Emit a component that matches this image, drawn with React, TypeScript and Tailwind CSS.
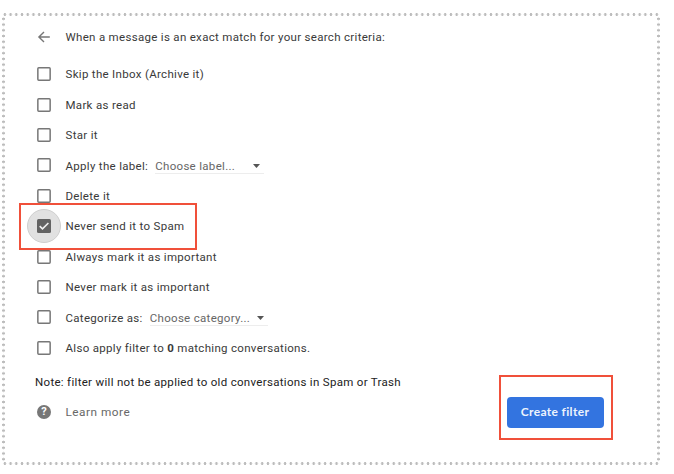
import type { ReactNode } from "react";

function Checkbox({ checked = false }: { checked?: boolean }) {
  if (checked) {
    return (
      <span className="-mx-[10px] flex size-[34px] shrink-0 items-center justify-center rounded-full border border-[#cfcfcf] bg-[#e1e1e1]">
        <span className="flex size-[14px] items-center justify-center rounded-[1.5px] bg-[#636363]">
          <svg viewBox="0 0 14 14" className="size-[14px]" fill="none" stroke="#f0f0f0" strokeWidth="1.6">
            <path d="M2.7 7.1 5.5 9.9 11.4 4" />
          </svg>
        </span>
      </span>
    );
  }
  return (
    <svg viewBox="0 0 14 14" className="size-[14px] shrink-0" fill="none" stroke="#777" strokeWidth="1.5">
      <rect x="0.85" y="0.85" width="12.3" height="12.3" rx="0.9" />
    </svg>
  );
}

function Option({ checked, children }: { checked?: boolean; children: ReactNode }) {
  return (
    <label className="flex h-[30.4px] items-center gap-[14.5px]">
      <Checkbox checked={checked} />
      <span className="flex items-center pt-[0.6px] whitespace-pre">{children}</span>
    </label>
  );
}

function Select({ className, children }: { className: string; children: ReactNode }) {
  return (
    <span className={`flex h-[17px] items-center justify-between border-b border-[#ededed] pt-[1px] text-[#666] ${className}`}>
      {children}
      <svg viewBox="0 0 7 4" className="h-[4px] w-[7px]" fill="#555">
        <path d="M0 0h7L3.5 4z" />
      </svg>
    </span>
  );
}

const dotsX =
  "h-[3px] bg-[radial-gradient(circle,#bcbcbc_1.1px,transparent_1.6px)] bg-[length:5.73px_3px] bg-repeat-x";
const dotsY =
  "w-[3px] bg-[radial-gradient(circle,#bcbcbc_1.1px,transparent_1.6px)] bg-[length:3px_5.73px] bg-repeat-y";

export default function App() {
  return (
    <div className="h-[474px] w-[674px] overflow-hidden bg-white pt-[13px] pl-[2px] font-['Roboto',sans-serif] text-[11.5px] leading-[16px] tracking-[0.31px] text-[#3a3a3a]">
      <div className="relative flex h-[452px] w-[658px] flex-col">
        <div className={dotsX} />
        <div className="flex flex-1">
          <div className={dotsY} />
          <main className="flex flex-1 flex-col pl-[32px]">
            <header className="flex h-[43px] items-center gap-[14.5px] pb-[1.2px]">
              <svg viewBox="0 0 14 14" className="size-[14px]" fill="none" stroke="#777" strokeWidth="1.4">
                <path d="M12.8 7H2.2M7 1.9 1.9 7 7 12.1" />
              </svg>
              <span>When a message is an exact match for your search criteria:</span>
            </header>
            <Option>Skip the Inbox (Archive it)</Option>
            <Option>Mark as read</Option>
            <Option>Star it</Option>
            <Option>
              Apply the label:<Select className="ml-[7px] w-[109px] pr-[4px]">Choose label...</Select>
            </Option>
            <Option>Delete it</Option>
            <Option checked>Never send it to Spam</Option>
            <Option>Always mark it as important</Option>
            <Option>Never mark it as important</Option>
            <Option>
              Categorize as:<Select className="ml-[7px] w-[118px] pr-[4px]">Choose category...</Select>
            </Option>
            <Option>
              Also apply filter to <b>0</b> matching conversations.
            </Option>
            <p className="-ml-[2px] pt-[11px] text-[#222]">
              Note: filter will not be applied to old conversations in Spam or Trash
            </p>
            <footer className="flex h-[45px] items-center justify-between pr-[53.5px]">
              <a className="flex items-center gap-[14.5px] text-[11.8px] tracking-[0.5px] text-[#686868]">
                <span className="flex size-[14px] items-center justify-center rounded-full bg-[#777] text-[11px] font-bold tracking-normal text-white">
                  ?
                </span>
                Learn more
              </a>
              <button className="h-[31px] w-[97px] rounded-[4px] bg-[#3374e0] font-['Lato',sans-serif] text-[12px] font-bold tracking-[0.35px] text-[#edf3fd]">
                Create filter
              </button>
            </footer>
          </main>
          <div className={dotsY} />
        </div>
        <div className={dotsX} />
        <div className="absolute top-[190px] left-[17px] h-[47px] w-[178px] border-2 border-[#f0503a]" />
        <div className="absolute top-[362px] left-[497px] h-[65px] w-[114px] border-2 border-[#f0503a]" />
      </div>
    </div>
  );
}
